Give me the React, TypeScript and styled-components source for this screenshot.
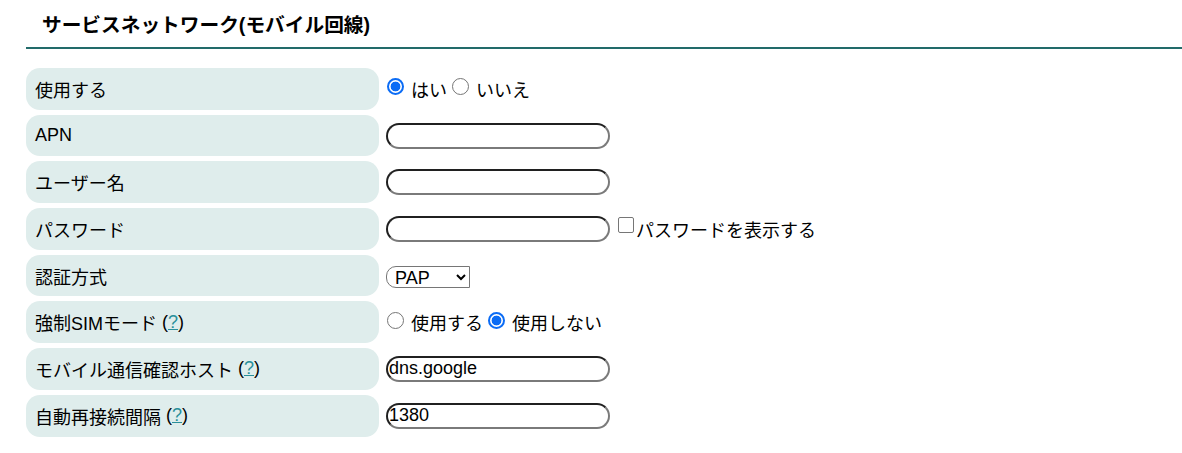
import React from "react";
import styled, { createGlobalStyle } from "styled-components";

const GlobalStyle = createGlobalStyle`
  html, body {
    margin: 0;
    padding: 0;
    background: #ffffff;
  }
  body {
    font-family: "Liberation Sans", "Noto Sans CJK JP", sans-serif;
    color: #000000;
  }
`;

const Page = styled.div`
  padding: 0 0 0 26px;
`;

const Heading = styled.h2`
  margin: 0;
  padding: 13px 0 9px 16px;
  font-size: 19.7px;
  font-weight: bold;
  line-height: 25px;
  border-bottom: 2px solid #226b6a;
`;

const Form = styled.div`
  display: grid;
  grid-template-columns: 353px 1fr;
  column-gap: 7px;
  row-gap: 5px;
  margin-top: 19px;
`;

const Label = styled.div`
  display: flex;
  align-items: center;
  height: 41.7px;
  padding-left: 9px;
  background: #dfedec;
  border-radius: 14px;
  font-size: 18px;
  white-space: nowrap;
`;

const Value = styled.div`
  display: flex;
  align-items: center;
  font-size: 18px;
  white-space: nowrap;
`;

const Help = styled.span`
  margin-left: 5px;
  a {
    color: #2a8f9a;
    text-decoration: underline;
  }
`;

const Radio = styled.input.attrs({ type: "radio" })`
  appearance: none;
  flex: none;
  box-sizing: border-box;
  width: 17px;
  height: 17px;
  margin: 0 7px 4px 1px;
  border: 1px solid #767676;
  border-radius: 50%;
  background: #ffffff;

  &:checked {
    border: 2px solid #0b6cf5;
    background: radial-gradient(circle, #0b6cf5 0 4.6px, #ffffff 5.2px);
  }
`;

const ChoiceText = styled.label`
  margin-right: 4px;
`;

const TextBox = styled.input.attrs({ type: "text" })`
  box-sizing: border-box;
  flex: none;
  width: 224px;
  height: 26px;
  margin: 0;
  padding: 0 0 0 1px;
  border-radius: 13px;
  border-style: solid;
  border-width: 2.5px;
  border-color: #202020 #7a7a7a #7a7a7a #202020;
  font-family: "Liberation Sans", sans-serif;
  font-size: 18px;
  color: #000000;
  background: #ffffff;
  outline: none;
`;

const CheckBox = styled.input.attrs({ type: "checkbox" })`
  appearance: none;
  flex: none;
  box-sizing: border-box;
  width: 16px;
  height: 16px;
  margin: 0 2px 7px 8px;
  border: 1px solid #767676;
  border-radius: 2px;
  background: #ffffff;
`;

const Select = styled.select`
  box-sizing: border-box;
  width: 84px;
  height: 22px;
  margin-top: 2px;
  padding: 0 0 0 4px;
  border: 1px solid #767676;
  border-radius: 10px 0 0 10px;
  background: #ffffff;
  font-family: "Liberation Sans", sans-serif;
  font-size: 18px;
  color: #000000;
`;

const HelpLink = () => (
  <Help>
    (<a href="#">?</a>)
  </Help>
);

export default function App() {
  return (
    <>
      <GlobalStyle />
      <Page>
        <Heading>サービスネットワーク(モバイル回線)</Heading>
        <Form>
          <Label>使用する</Label>
          <Value>
            <Radio name="use" id="use-yes" defaultChecked />
            <ChoiceText htmlFor="use-yes">はい</ChoiceText>
            <Radio name="use" id="use-no" />
            <ChoiceText htmlFor="use-no">いいえ</ChoiceText>
          </Value>

          <Label>APN</Label>
          <Value>
            <TextBox defaultValue="" />
          </Value>

          <Label>ユーザー名</Label>
          <Value>
            <TextBox defaultValue="" />
          </Value>

          <Label>パスワード</Label>
          <Value>
            <TextBox defaultValue="" />
            <CheckBox id="show-pass" />
            <label htmlFor="show-pass">パスワードを表示する</label>
          </Value>

          <Label>認証方式</Label>
          <Value>
            <Select defaultValue="PAP">
              <option>PAP</option>
              <option>CHAP</option>
            </Select>
          </Value>

          <Label>
            強制SIMモード
            <HelpLink />
          </Label>
          <Value>
            <Radio name="sim" id="sim-on" />
            <ChoiceText htmlFor="sim-on">使用する</ChoiceText>
            <Radio name="sim" id="sim-off" defaultChecked />
            <ChoiceText htmlFor="sim-off">使用しない</ChoiceText>
          </Value>

          <Label>
            モバイル通信確認ホスト
            <HelpLink />
          </Label>
          <Value>
            <TextBox defaultValue="dns.google" />
          </Value>

          <Label>
            自動再接続間隔
            <HelpLink />
          </Label>
          <Value>
            <TextBox defaultValue="1380" />
          </Value>
        </Form>
      </Page>
    </>
  );
}
